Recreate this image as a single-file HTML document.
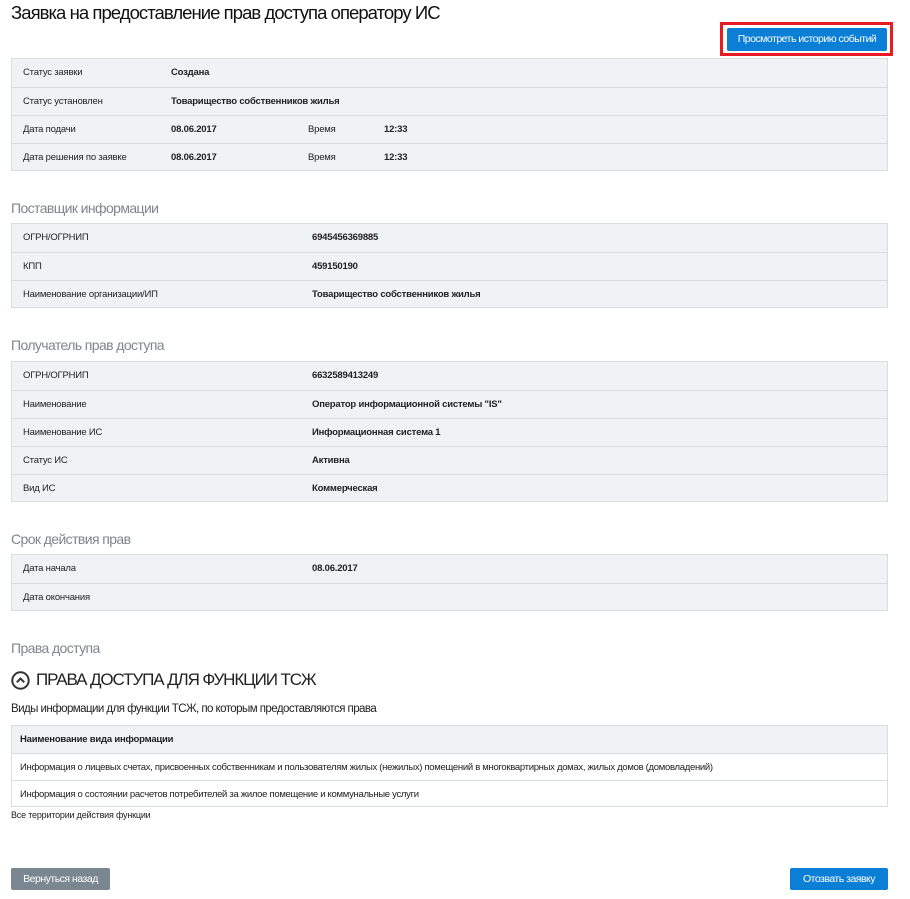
<!DOCTYPE html>
<html><head><meta charset="utf-8"><style>
*{margin:0;padding:0;box-sizing:border-box}
body{width:910px;height:899px;background:#fff;font-family:"Liberation Sans",sans-serif;color:#222;position:relative;overflow:hidden}
.a{position:absolute;white-space:nowrap}
.t{position:absolute;left:11px;width:877px;border:1px solid #d8dde2;background:#f0f3f6}
.r{position:relative;height:28px;border-top:1px solid #d8dde2;font-size:9.5px;letter-spacing:-0.2px}
.r:first-child{border-top:none}
.r span{position:absolute;top:8px}
.r .l{left:11px}
.r b{position:absolute;top:8px;font-weight:bold}
.h{position:absolute;left:11px;font-size:14px;color:#7d868d;letter-spacing:-0.6px}
.btn{position:absolute;color:#fff;font-size:10.5px;letter-spacing:-0.5px;text-align:center;border-radius:2px}
</style></head><body>
<div class="a" style="left:11px;top:2px;font-size:18.5px;letter-spacing:-0.95px;color:#111">Заявка на предоставление прав доступа оператору ИС</div>
<div class="a" style="left:720px;top:22px;width:173px;height:34px;border:3px solid #e81a22"></div>
<div class="btn" style="left:727px;top:28px;width:160px;height:23px;line-height:23px;background:#0b7fd6">Просмотреть историю событий</div>

<div class="t" style="top:58px;height:113px">
<div class="r"><span class="l">Статус заявки</span><b style="left:159px">Создана</b></div>
<div class="r"><span class="l">Статус установлен</span><b style="left:159px">Товарищество собственников жилья</b></div>
<div class="r"><span class="l">Дата подачи</span><b style="left:159px">08.06.2017</b><span style="left:296px">Время</span><b style="left:372px">12:33</b></div>
<div class="r"><span class="l">Дата решения по заявке</span><b style="left:159px">08.06.2017</b><span style="left:296px">Время</span><b style="left:372px">12:33</b></div>
</div>

<div class="h" style="top:200px">Поставщик информации</div>
<div class="t" style="top:223px;height:85px">
<div class="r"><span class="l">ОГРН/ОГРНИП</span><b style="left:300px">6945456369885</b></div>
<div class="r"><span class="l">КПП</span><b style="left:300px">459150190</b></div>
<div class="r"><span class="l">Наименование организации/ИП</span><b style="left:300px">Товарищество собственников жилья</b></div>
</div>

<div class="h" style="top:337px">Получатель прав доступа</div>
<div class="t" style="top:361px;height:141px">
<div class="r"><span class="l">ОГРН/ОГРНИП</span><b style="left:300px">6632589413249</b></div>
<div class="r"><span class="l">Наименование</span><b style="left:300px">Оператор информационной системы "IS"</b></div>
<div class="r"><span class="l">Наименование ИС</span><b style="left:300px">Информационная система 1</b></div>
<div class="r"><span class="l">Статус ИС</span><b style="left:300px">Активна</b></div>
<div class="r"><span class="l">Вид ИС</span><b style="left:300px">Коммерческая</b></div>
</div>

<div class="h" style="top:531px">Срок действия прав</div>
<div class="t" style="top:554px;height:57px">
<div class="r"><span class="l">Дата начала</span><b style="left:300px">08.06.2017</b></div>
<div class="r"><span class="l">Дата окончания</span></div>
</div>

<div class="h" style="top:640px">Права доступа</div>
<svg class="a" style="left:11px;top:671px" width="19" height="19" viewBox="0 0 19 19"><circle cx="9.5" cy="9.5" r="8.2" fill="none" stroke="#333" stroke-width="2"/><path d="M5.8 11.3 L9.5 7.6 L13.2 11.3" fill="none" stroke="#333" stroke-width="2"/></svg>
<div class="a" style="left:36px;top:670px;font-size:17px;letter-spacing:-1.1px;color:#222">ПРАВА ДОСТУПА ДЛЯ ФУНКЦИИ ТСЖ</div>
<div class="a" style="left:11px;top:703px;font-size:11.5px;letter-spacing:-0.55px;color:#222">Виды информации для функции ТСЖ, по которым предоставляются права</div>
<div class="t" style="top:725px;height:82px;background:#fff">
<div class="r" style="background:#f0f3f6;height:27px"><b style="left:8px">Наименование вида информации</b></div>
<div class="r" style="height:27px"><span style="left:8px;letter-spacing:-0.3px">Информация о лицевых счетах, присвоенных собственникам и пользователям жилых (нежилых) помещений в многоквартирных домах, жилых домов (домовладений)</span></div>
<div class="r" style="height:27px"><span style="left:8px;letter-spacing:-0.3px">Информация о состоянии расчетов потребителей за жилое помещение и коммунальные услуги</span></div>
</div>
<div class="a" style="left:11px;top:810px;font-size:9px;letter-spacing:-0.2px">Все территории действия функции</div>

<div class="btn" style="left:11px;top:868px;width:99px;height:22px;line-height:22px;background:#7a8791">Вернуться назад</div>
<div class="btn" style="left:790px;top:868px;width:98px;height:22px;line-height:22px;background:#0b7fd6">Отозвать заявку</div>
</body></html>
